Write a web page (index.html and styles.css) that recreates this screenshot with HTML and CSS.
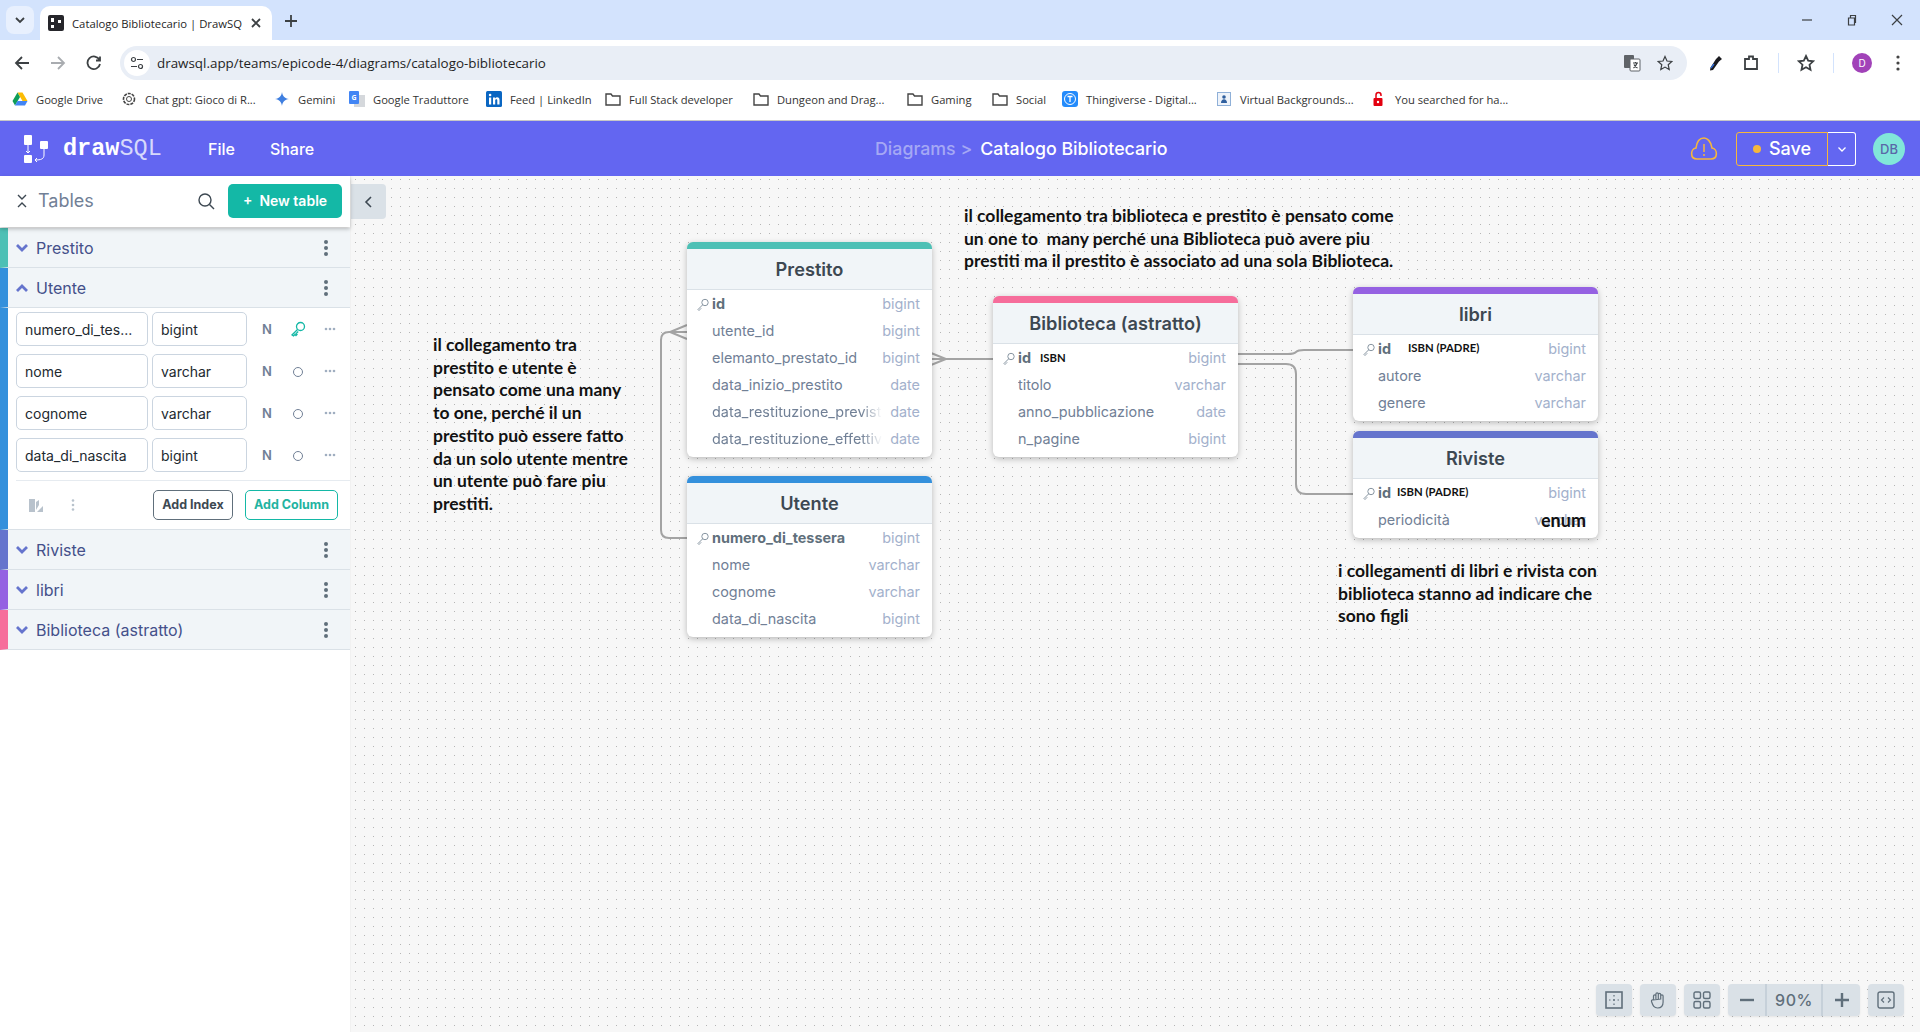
FILE: index.html
```html
<!DOCTYPE html>
<html>
<head>
    <title>Catalogo Bibliotecario | DrawSQL</title>
    <link rel="stylesheet" href="styles.css">
</head>
<body>
    <div class="tabstrip">
        <div class="tab-search">
            <svg width="12" height="12" viewBox="0 0 12 12"><path d="M2 4l4 4 4-4" class="ic-dark"/></svg>
        </div>
        <div class="tab">
            <svg class="favicon" width="16" height="16" viewBox="0 0 16 16"><rect width="16" height="16" rx="2" fill="#26262b"/><rect x="3" y="3" width="3" height="4" fill="#fff"/><rect x="3" y="10" width="3" height="3" fill="#fff"/><rect x="10" y="5" width="3" height="3" fill="#fff"/></svg>
            <span class="tab-title">Catalogo Bibliotecario | DrawSQ</span>
            <svg width="12" height="12" viewBox="0 0 12 12"><path d="M2 2l8 8M10 2l-8 8" class="ic-dark"/></svg>
        </div>
        <svg class="new-tab" width="14" height="14" viewBox="0 0 14 14"><path d="M7 1v12M1 7h12" class="ic-dark"/></svg>
        <div class="window-btns">
            <svg width="12" height="12" viewBox="0 0 12 12"><path d="M1 6h10" class="ic-thin"/></svg>
            <svg width="12" height="12" viewBox="0 0 12 12"><path d="M2.500 4h6v7h-6zM4.500 4V1.500h5v7h-1" class="ic-thin"/></svg>
            <svg width="12" height="12" viewBox="0 0 12 12"><path d="M1 1l10 10M11 1L1 11" class="ic-thin"/></svg>
        </div>
    </div>

    <div class="toolbar">
        <div class="nav-btns">
            <svg width="16" height="16" viewBox="0 0 16 16"><path d="M15 8H2M8 2L2 8l6 6" class="ic-dark"/></svg>
            <svg width="16" height="16" viewBox="0 0 16 16"><path d="M1 8h13M8 2l6 6-6 6" class="ic-faded"/></svg>
            <svg width="16" height="16" viewBox="0 0 16 16"><path d="M13.500 5A6.300 6.300 0 1 0 14 9M14 1.500V5.500h-4" class="ic-dark"/></svg>
        </div>
        <div class="omnibox">
            <span class="site-info">
                <svg width="14" height="14" viewBox="0 0 14 14"><circle cx="3.500" cy="3.500" r="2" class="ic-thin"/><path d="M7 3.500h6M1 10.500h6" class="ic-thin"/><circle cx="10.500" cy="10.500" r="2" class="ic-thin"/></svg>
            </span>
            <span class="url">drawsql.app/teams/epicode-4/diagrams/catalogo-bibliotecario</span>
            <svg class="omni-translate" width="18" height="18" viewBox="0 0 18 18"><rect x="1" y="1" width="10" height="13" rx="1" fill="#5f6368"/><rect x="7" y="5" width="10" height="12" rx="1" fill="#fff" stroke="#5f6368"/><path d="M10 9h5M12.500 8v1M14 9c-1 3-2 4-3.500 5M11 10.500c1 2 2 3 3.500 3.500" class="ic-thin"/></svg>
            <svg width="16" height="16" viewBox="0 0 16 16"><path d="M8 1.500l2 4.500 4.800.5-3.600 3.200 1 4.800L8 12.100l-4.200 2.400 1-4.800L1.200 6.500 6 6z" class="ic-thin"/></svg>
        </div>
        <svg width="18" height="18" viewBox="0 0 18 18"><path d="M13 2l3 3-3 2.500-6 8.500-3 .5.500-3L10 5z" fill="#1b1b1f"/><path d="M4.500 13.500l3-4 1 1-3 4z" fill="#2e6bd6"/></svg>
        <svg width="18" height="18" viewBox="0 0 18 18"><path d="M3 5h4V2.500h4V5h4v10H3z" class="ic-dark" stroke-width="1.500"/></svg>
        <span class="tool-sep"></span>
        <svg width="18" height="18" viewBox="0 0 18 18"><path d="M9 2l2.200 4.700 5 .6-3.700 3.400 1 5L9 13.200l-4.500 2.500 1-5L1.800 7.300l5-.6z" class="ic-dark" stroke-width="1.500"/></svg>
        <span class="tool-sep"></span>
        <span class="profile">D</span>
        <svg class="chrome-menu" width="6" height="18" viewBox="0 0 6 18"><circle cx="3" cy="3" r="1.600" fill="#444"/><circle cx="3" cy="9" r="1.600" fill="#444"/><circle cx="3" cy="15" r="1.600" fill="#444"/></svg>
    </div>

    <div class="bookmarks">
        <div class="bm">
            <svg width="16" height="16" viewBox="0 0 16 16"><path d="M5.500 1.500h5L15.500 10h-5z" fill="#fbbc04"/><path d="M5.500 1.500L.5 10 3 14.500 8 6z" fill="#0f9d58"/><path d="M3 14.500h10l2.500-4.500h-10z" fill="#4285f4"/></svg>
            <span>Google Drive</span>
        </div>
        <div class="bm">
            <svg width="16" height="16" viewBox="0 0 16 16"><circle cx="8" cy="8" r="5.500" fill="none" stroke="#444" stroke-width="1.600" stroke-dasharray="3 1"/><circle cx="8" cy="8" r="2.500" fill="none" stroke="#444"/></svg>
            <span>Chat gpt: Gioco di R...</span>
        </div>
        <div class="bm">
            <svg width="16" height="16" viewBox="0 0 16 16"><path d="M8 1c.6 4 2.500 6.200 7 7-4.500.8-6.400 3-7 7-.6-4-2.500-6.200-7-7 4.500-.8 6.400-3 7-7z" fill="#3f7fe0"/></svg>
            <span>Gemini</span>
        </div>
        <div class="bm">
            <svg width="16" height="16" viewBox="0 0 16 16"><rect x="5" y="4" width="11" height="12" fill="#d5d8dc"/><rect width="10" height="13" rx="1" fill="#4285f4"/><text x="2.500" y="9" class="bm-letter">G</text></svg>
            <span>Google Traduttore</span>
        </div>
        <div class="bm">
            <svg width="16" height="16" viewBox="0 0 16 16"><rect width="16" height="16" rx="1.500" fill="#0a66c2"/><rect x="3" y="6.500" width="2.200" height="7" fill="#fff"/><circle cx="4.100" cy="4" r="1.300" fill="#fff"/><path d="M7 6.500h2v1c.5-.8 1.300-1.200 2.200-1.200 1.600 0 2.300 1 2.300 2.800v4.400h-2.200V9.600c0-.9-.3-1.400-1-1.400-.8 0-1.100.6-1.100 1.400v3.900H7z" fill="#fff"/></svg>
            <span>Feed | LinkedIn</span>
        </div>
        <div class="bm">
            <svg width="16" height="16" viewBox="0 0 16 16"><path class="folder" d="M1 3h5l1.500 2H15v9H1z"/></svg>
            <span>Full Stack developer</span>
        </div>
        <div class="bm">
            <svg width="16" height="16" viewBox="0 0 16 16"><path class="folder" d="M1 3h5l1.500 2H15v9H1z"/></svg>
            <span>Dungeon and Drag...</span>
        </div>
        <div class="bm">
            <svg width="16" height="16" viewBox="0 0 16 16"><path class="folder" d="M1 3h5l1.500 2H15v9H1z"/></svg>
            <span>Gaming</span>
        </div>
        <div class="bm">
            <svg width="16" height="16" viewBox="0 0 16 16"><path class="folder" d="M1 3h5l1.500 2H15v9H1z"/></svg>
            <span>Social</span>
        </div>
        <div class="bm">
            <svg width="16" height="16" viewBox="0 0 16 16"><rect width="16" height="16" rx="3" fill="#248bfb"/><circle cx="8" cy="8" r="5.500" fill="none" stroke="#fff"/><path d="M5.500 5.500h5M8 5.500v5.500" stroke="#fff" stroke-width="1.300"/></svg>
            <span>Thingiverse - Digital...</span>
        </div>
        <div class="bm">
            <svg width="16" height="16" viewBox="0 0 16 16"><rect x="1.500" y="1.500" width="13" height="13" fill="#eef3fa" stroke="#8fb0d8"/><circle cx="8" cy="6" r="1.800" fill="#2f5f9e"/><path d="M5 12c0-5 6-5 6 0z" fill="#2f5f9e"/></svg>
            <span>Virtual Backgrounds...</span>
        </div>
        <div class="bm">
            <svg width="16" height="16" viewBox="0 0 16 16"><rect x="2.500" y="7" width="9" height="8" rx="1" fill="#e3000f"/><path d="M5 7V4a2.500 2.500 0 0 1 5 0v1" fill="none" stroke="#e3000f" stroke-width="1.500"/><circle cx="7" cy="11" r="1.200" fill="#fff"/></svg>
            <span>You searched for ha...</span>
        </div>
    </div>

    <div class="app">
        <header class="app-header">
            <div class="logo">
                <svg width="28" height="30" viewBox="0 0 28 30"><rect x="2" y="1" width="8" height="10" rx="1" fill="#fff"/><rect x="2" y="21" width="8" height="8" rx="1" fill="#fff"/><rect x="18" y="7" width="8" height="8" rx="1" fill="#fff"/><path d="M6 11v8M4 17l2 2 2-2M22 15v6c0 4-3 5-9 5M15 24l-2 2 2 2" fill="none" stroke="#fff" stroke-width="1"/></svg>
                <span class="logo-text"><b>draw</b><span>SQL</span></span>
            </div>
            <nav class="menu">
                <span>File</span>
                <span>Share</span>
            </nav>
            <div class="crumbs">
                <span class="crumb-muted">Diagrams &gt;</span>
                <span class="crumb-name">Catalogo Bibliotecario</span>
            </div>
            <div class="header-right">
                <svg width="28" height="26" viewBox="0 0 28 26"><path d="M7 23c-7 0-7-10-1-11C7 4 11 2 14 2s7 3 8 10c6 1 6 11-1 11z" fill="none" stroke="#f6b73c" stroke-width="1.600"/><path d="M14 8v8M14 18v2" stroke="#f6b73c" stroke-width="1.500"/></svg>
                <div class="save-group">
                    <button class="save-btn"><i class="save-dot"></i>Save</button>
                    <button class="save-more">
                        <svg width="10" height="10" viewBox="0 0 10 10"><path d="M1.500 3.500L5 7l3.500-3.500" fill="none" stroke="#fff" stroke-width="1.300"/></svg>
                    </button>
                </div>
                <span class="avatar">DB</span>
            </div>
        </header>

        <div class="workspace">
            <aside class="sidebar">
                <div class="side-head">
                    <svg width="14" height="16" viewBox="0 0 14 16"><path d="M3 2l4 4 4-4M3 14l4-4 4 4" fill="none" stroke="#3d4852" stroke-width="1.400"/></svg>
                    <span class="side-title">Tables</span>
                    <svg class="side-search" width="18" height="18" viewBox="0 0 18 18"><circle cx="8" cy="8" r="6" fill="none" stroke="#3d4852" stroke-width="1.400"/><path d="M12.500 12.500L17 17" stroke="#3d4852" stroke-width="1.400"/></svg>
                    <button class="new-table">+&nbsp; New table</button>
                </div>

                <div class="side-row c-prestito">
                    <svg class="chev" width="14" height="10" viewBox="0 0 14 10"><path d="M2 2l5 5 5-5"/></svg>
                    <span class="side-name">Prestito</span>
                    <svg class="kebab" width="4" height="16" viewBox="0 0 4 16"><circle cx="2" cy="2" r="2"/><circle cx="2" cy="8" r="2"/><circle cx="2" cy="14" r="2"/></svg>
                </div>

                <div class="side-row c-utente">
                    <svg class="chev" width="14" height="10" viewBox="0 0 14 10"><path d="M2 8l5-5 5 5"/></svg>
                    <span class="side-name">Utente</span>
                    <svg class="kebab" width="4" height="16" viewBox="0 0 4 16"><circle cx="2" cy="2" r="2"/><circle cx="2" cy="8" r="2"/><circle cx="2" cy="14" r="2"/></svg>
                </div>

                <div class="side-body c-utente">
                    <div class="col-row">
                        <span class="col-input col-name">numero_di_tes...</span>
                        <span class="col-input col-type">bigint</span>
                        <span class="col-n">N</span>
                        <svg class="col-flag" width="16" height="16" viewBox="0 0 16 16"><circle cx="10.500" cy="5.500" r="4" fill="none" stroke="#14b8a6" stroke-width="1.300"/><path d="M7.500 8.500L2 14l1.500 1 1.500-1.500 1 1 1-1-.8-1 2-2" fill="none" stroke="#14b8a6" stroke-width="1.300"/></svg>
                        <svg class="col-more" width="12" height="4" viewBox="0 0 12 4"><circle cx="2" cy="2" r="1.300"/><circle cx="6" cy="2" r="1.300"/><circle cx="10" cy="2" r="1.300"/></svg>
                    </div>
                    <div class="col-row">
                        <span class="col-input col-name">nome</span>
                        <span class="col-input col-type">varchar</span>
                        <span class="col-n">N</span>
                        <svg class="col-flag" width="16" height="16" viewBox="0 0 16 16"><circle cx="8" cy="9" r="4.500" fill="none" stroke="#718096" stroke-width="1"/></svg>
                        <svg class="col-more" width="12" height="4" viewBox="0 0 12 4"><circle cx="2" cy="2" r="1.300"/><circle cx="6" cy="2" r="1.300"/><circle cx="10" cy="2" r="1.300"/></svg>
                    </div>
                    <div class="col-row">
                        <span class="col-input col-name">cognome</span>
                        <span class="col-input col-type">varchar</span>
                        <span class="col-n">N</span>
                        <svg class="col-flag" width="16" height="16" viewBox="0 0 16 16"><circle cx="8" cy="9" r="4.500" fill="none" stroke="#718096" stroke-width="1"/></svg>
                        <svg class="col-more" width="12" height="4" viewBox="0 0 12 4"><circle cx="2" cy="2" r="1.300"/><circle cx="6" cy="2" r="1.300"/><circle cx="10" cy="2" r="1.300"/></svg>
                    </div>
                    <div class="col-row">
                        <span class="col-input col-name">data_di_nascita</span>
                        <span class="col-input col-type">bigint</span>
                        <span class="col-n">N</span>
                        <svg class="col-flag" width="16" height="16" viewBox="0 0 16 16"><circle cx="8" cy="9" r="4.500" fill="none" stroke="#718096" stroke-width="1"/></svg>
                        <svg class="col-more" width="12" height="4" viewBox="0 0 12 4"><circle cx="2" cy="2" r="1.300"/><circle cx="6" cy="2" r="1.300"/><circle cx="10" cy="2" r="1.300"/></svg>
                    </div>
                    <div class="side-actions">
                        <svg width="16" height="14" viewBox="0 0 16 14"><path d="M1 1h6v13H1zM8 4l3-2v5l-3 5zM9 14l6-6v6z" fill="#b8c2cc"/></svg>
                        <svg class="more-v" width="4" height="12" viewBox="0 0 4 12"><circle cx="2" cy="1.500" r="1.300"/><circle cx="2" cy="6" r="1.300"/><circle cx="2" cy="10.500" r="1.300"/></svg>
                        <button class="btn-index">Add Index</button>
                        <button class="btn-column">Add Column</button>
                    </div>
                </div>

                <div class="side-row c-riviste">
                    <svg class="chev" width="14" height="10" viewBox="0 0 14 10"><path d="M2 2l5 5 5-5"/></svg>
                    <span class="side-name">Riviste</span>
                    <svg class="kebab" width="4" height="16" viewBox="0 0 4 16"><circle cx="2" cy="2" r="2"/><circle cx="2" cy="8" r="2"/><circle cx="2" cy="14" r="2"/></svg>
                </div>
                <div class="side-row c-libri">
                    <svg class="chev" width="14" height="10" viewBox="0 0 14 10"><path d="M2 2l5 5 5-5"/></svg>
                    <span class="side-name">libri</span>
                    <svg class="kebab" width="4" height="16" viewBox="0 0 4 16"><circle cx="2" cy="2" r="2"/><circle cx="2" cy="8" r="2"/><circle cx="2" cy="14" r="2"/></svg>
                </div>
                <div class="side-row c-biblioteca">
                    <svg class="chev" width="14" height="10" viewBox="0 0 14 10"><path d="M2 2l5 5 5-5"/></svg>
                    <span class="side-name">Biblioteca (astratto)</span>
                    <svg class="kebab" width="4" height="16" viewBox="0 0 4 16"><circle cx="2" cy="2" r="2"/><circle cx="2" cy="8" r="2"/><circle cx="2" cy="14" r="2"/></svg>
                </div>
            </aside>

            <main class="canvas">
                <button class="collapse">
                    <svg width="10" height="14" viewBox="0 0 10 14"><path d="M8 2L3 7l5 5" fill="none" stroke="#3d4852" stroke-width="1.600"/></svg>
                </button>

                <!-- linee tra le tabelle, coordinate relative al canvas -->
                <svg class="links" width="1569" height="856" viewBox="351 176 1569 856">
                    <path d="M687 538H669Q661 538 661 530V340Q661 332 669 332H687M687 325L670 332L687 339"/>
                    <path d="M993 359H931M931 353L946 359L931 365"/>
                    <path d="M1237 354H1288Q1294 354 1296 352Q1298 350 1304 350H1353"/>
                    <path d="M1237 364H1286Q1296 364 1296 374V484Q1296 494 1306 494H1353"/>
                </svg>

                <p class="note note-left">il collegamento tra<br>prestito e utente è<br>pensato come una many<br>to one, perché il un<br>prestito può essere fatto<br>da un solo utente mentre<br>un utente può fare piu<br>prestiti.</p>
                <p class="note note-top">il collegamento tra biblioteca e prestito è pensato come<br>un one to&nbsp; many perché una Biblioteca può avere piu<br>prestiti ma il prestito è associato ad una sola Biblioteca.</p>
                <p class="note note-right">i collegamenti di libri e rivista con<br>biblioteca stanno ad indicare che<br>sono figli</p>

                <section class="tbl t-prestito">
                    <h2 class="tbl-head">Prestito</h2>
                    <div class="tbl-row pk"><svg class="key" width="12" height="13" viewBox="0 0 12 13"><circle cx="8" cy="4.500" r="3.200"/><path d="M5.700 6.800L1 11.500l1 1 1.200-1.200M3.200 11.300l1-1"/></svg><span class="c-n">id</span><span class="c-t">bigint</span></div>
                    <div class="tbl-row"><span class="c-n">utente_id</span><span class="c-t">bigint</span></div>
                    <div class="tbl-row"><span class="c-n">elemanto_prestato_id</span><span class="c-t">bigint</span></div>
                    <div class="tbl-row"><span class="c-n">data_inizio_prestito</span><span class="c-t">date</span></div>
                    <div class="tbl-row"><span class="c-n fade">data_restituzione_prevista</span><span class="c-t">date</span></div>
                    <div class="tbl-row"><span class="c-n fade">data_restituzione_effettiva</span><span class="c-t">date</span></div>
                </section>

                <section class="tbl t-utente">
                    <h2 class="tbl-head">Utente</h2>
                    <div class="tbl-row pk"><svg class="key" width="12" height="13" viewBox="0 0 12 13"><circle cx="8" cy="4.500" r="3.200"/><path d="M5.700 6.800L1 11.500l1 1 1.200-1.200M3.200 11.300l1-1"/></svg><span class="c-n">numero_di_tessera</span><span class="c-t">bigint</span></div>
                    <div class="tbl-row"><span class="c-n">nome</span><span class="c-t">varchar</span></div>
                    <div class="tbl-row"><span class="c-n">cognome</span><span class="c-t">varchar</span></div>
                    <div class="tbl-row"><span class="c-n">data_di_nascita</span><span class="c-t">bigint</span></div>
                </section>

                <section class="tbl t-biblioteca">
                    <h2 class="tbl-head">Biblioteca (astratto)</h2>
                    <div class="tbl-row pk"><svg class="key" width="12" height="13" viewBox="0 0 12 13"><circle cx="8" cy="4.500" r="3.200"/><path d="M5.700 6.800L1 11.500l1 1 1.200-1.200M3.200 11.300l1-1"/></svg><span class="c-n">id</span><span class="tag tag-isbn">ISBN</span><span class="c-t">bigint</span></div>
                    <div class="tbl-row"><span class="c-n">titolo</span><span class="c-t">varchar</span></div>
                    <div class="tbl-row"><span class="c-n">anno_pubblicazione</span><span class="c-t">date</span></div>
                    <div class="tbl-row"><span class="c-n">n_pagine</span><span class="c-t">bigint</span></div>
                </section>

                <section class="tbl t-libri">
                    <h2 class="tbl-head">libri</h2>
                    <div class="tbl-row pk"><svg class="key" width="12" height="13" viewBox="0 0 12 13"><circle cx="8" cy="4.500" r="3.200"/><path d="M5.700 6.800L1 11.500l1 1 1.200-1.200M3.200 11.300l1-1"/></svg><span class="c-n">id</span><span class="tag tag-libri">ISBN (PADRE)</span><span class="c-t">bigint</span></div>
                    <div class="tbl-row"><span class="c-n">autore</span><span class="c-t">varchar</span></div>
                    <div class="tbl-row"><span class="c-n">genere</span><span class="c-t">varchar</span></div>
                </section>

                <section class="tbl t-riviste">
                    <h2 class="tbl-head">Riviste</h2>
                    <div class="tbl-row pk"><svg class="key" width="12" height="13" viewBox="0 0 12 13"><circle cx="8" cy="4.500" r="3.200"/><path d="M5.700 6.800L1 11.500l1 1 1.200-1.200M3.200 11.300l1-1"/></svg><span class="c-n">id</span><span class="tag tag-riviste">ISBN (PADRE)</span><span class="c-t">bigint</span></div>
                    <div class="tbl-row"><span class="c-n">periodicità</span><span class="c-t">varchar</span><span class="enum">enum</span></div>
                </section>

                <div class="controls">
                    <button class="ctl">
                        <svg width="18" height="18" viewBox="0 0 18 18"><rect x="1" y="1" width="16" height="16" fill="none" stroke="#606f7b" stroke-width="1.600"/><path d="M9 4v1.500M9 8v2M9 12.500V14M4 9h1.500M8 9h2M12.500 9H14" stroke="#606f7b" stroke-width="1.200"/></svg>
                    </button>
                    <button class="ctl">
                        <svg width="16" height="18" viewBox="0 0 16 18"><path d="M3.500 9V5a1.200 1.200 0 0 1 2.400 0V8M5.900 8V3a1.200 1.200 0 0 1 2.400 0V8M8.300 8V3.500a1.200 1.200 0 0 1 2.400 0V8M10.700 8V5a1.200 1.200 0 0 1 2.400 0V11c0 3.500-2 6-5.500 6S3 15 1.500 10.500C1.200 9 2.500 8.500 3.500 9z" fill="none" stroke="#606f7b" stroke-width="1.200"/></svg>
                    </button>
                    <button class="ctl">
                        <svg width="18" height="18" viewBox="0 0 18 18" fill="none" stroke="#606f7b" stroke-width="1.400"><rect x="1" y="1" width="6.500" height="6.500" rx="1.500"/><rect x="10.500" y="1" width="6.500" height="6.500" rx="1.500"/><rect x="1" y="10.500" width="6.500" height="6.500" rx="1.500"/><rect x="10.500" y="10.500" width="6.500" height="6.500" rx="1.500"/></svg>
                    </button>
                    <div class="zoom-group">
                        <button class="zoom-btn"><svg width="14" height="14" viewBox="0 0 14 14"><path d="M0 7h14" stroke="#606f7b" stroke-width="2.400"/></svg></button>
                        <span class="zoom-val">90%</span>
                        <button class="zoom-btn"><svg width="14" height="14" viewBox="0 0 14 14"><path d="M0 7h14M7 0v14" stroke="#606f7b" stroke-width="2.400"/></svg></button>
                    </div>
                    <button class="ctl">
                        <svg width="18" height="18" viewBox="0 0 18 18" fill="none" stroke="#606f7b"><rect x="1" y="1" width="16" height="16" rx="2" stroke-width="1.400"/><path d="M7 6.500L4.500 9 7 11.500M11 6.500L13.500 9 11 11.500" stroke-width="1.200"/></svg>
                    </button>
                </div>
            </main>
        </div>
    </div>
</body>
</html>
```

FILE: styles.css
```css
* {
    box-sizing: border-box;
}

html, body {
    height: 100%;
}

body {
    margin: 0;
    font-family: Inter, "Liberation Sans", sans-serif;
    background-color: #fff;
    overflow: hidden;
    display: flex;
    flex-direction: column;
}

button {
    font-family: inherit;
    cursor: pointer;
}

svg {
    flex: none;
    display: block;
}

.ic-dark {
    fill: none;
    stroke: #3c4043;
    stroke-width: 1.800;
}

.ic-thin {
    fill: none;
    stroke: #3c4043;
    stroke-width: 1.200;
}

.ic-faded {
    fill: none;
    stroke: #a9acb0;
    stroke-width: 1.800;
}

/* barra del browser */
.tabstrip {
    height: 40px;
    flex: none;
    background-color: #d3e3fd;
    display: flex;
    align-items: flex-end;
    padding-left: 6px;
}

.tab-search {
    width: 28px;
    height: 28px;
    margin: 0 6px 6px 0;
    border-radius: 8px;
    background-color: #e8f0fe;
    display: flex;
    align-items: center;
    justify-content: center;
}

.tab {
    width: 232px;
    height: 34px;
    background-color: #fff;
    border-radius: 10px 10px 0 0;
    display: flex;
    align-items: center;
    padding: 0 10px 0 8px;
    font-family: "Open Sans", sans-serif;
    font-size: 11.300px;
    color: #1f1f1f;
}

.tab-title {
    flex: 1;
    margin-left: 8px;
    white-space: nowrap;
}

.new-tab {
    margin: 0 0 12px 12px;
}

.window-btns {
    margin-left: auto;
    display: flex;
    gap: 33px;
    padding-right: 17px;
    margin-bottom: 14px;
}

.toolbar {
    height: 44px;
    flex: none;
    background-color: #fff;
    display: flex;
    align-items: center;
    padding: 2px 19px 0 14px;
    gap: 18px;
}

.nav-btns {
    display: flex;
    gap: 20px;
}

.omnibox {
    flex: 1;
    height: 34px;
    margin-right: 1px;
    border-radius: 17px;
    background-color: #e9eef6;
    display: flex;
    align-items: center;
    gap: 16px;
    padding: 0 14px 0 4px;
}

.site-info {
    width: 26px;
    height: 26px;
    margin-right: -9px;
    border-radius: 50%;
    background-color: #fff;
    display: flex;
    align-items: center;
    justify-content: center;
}

.url {
    flex: 1;
    font-family: "Open Sans", sans-serif;
    font-size: 13.400px;
    color: #1f1f1f;
}

.tool-sep {
    width: 1px;
    height: 20px;
    background-color: #d3e3fd;
}

.profile {
    width: 20px;
    height: 20px;
    border-radius: 50%;
    background-color: #a142b8;
    color: #fff;
    font-size: 10px;
    display: flex;
    align-items: center;
    justify-content: center;
}

.chrome-menu {
    margin-left: 5px;
}

.bookmarks {
    height: 37px;
    flex: none;
    display: grid;
    grid-template-columns: 109px 153px 75px 137px 119px 148px 154px 85px 70px 154px 155px 1fr;
    align-items: center;
    padding: 0 0 6px 12px;
    border-bottom: 1px solid #c7c7c7;
    font-family: "Open Sans", sans-serif;
    font-size: 11.200px;
    color: #333;
}

.bm {
    display: flex;
    align-items: center;
    gap: 8px;
    white-space: nowrap;
}

.bm-letter {
    font-size: 7px;
    font-weight: 700;
    fill: #fff;
}

.folder {
    fill: none;
    stroke: #444;
    stroke-width: 1.400;
}

/* drawsql */
.app {
    flex: 1;
    min-height: 0;
    display: flex;
    flex-direction: column;
}

.app-header {
    height: 55px;
    flex: none;
    background-color: #6366f1;
    color: #fff;
    display: flex;
    align-items: center;
    position: relative;
    padding: 0 15px 0 22px;
}

.logo {
    display: flex;
    align-items: center;
    gap: 13px;
    width: 186px;
}

.logo-text {
    font-family: "Liberation Mono", monospace;
    font-size: 23.500px;
    line-height: 1;
}

.logo-text span {
    color: #d7d9fb;
}

.menu {
    display: flex;
    gap: 35px;
    font-size: 16px;
    font-weight: 500;
}

.crumbs {
    position: absolute;
    left: 875px;
    display: flex;
    gap: 8px;
    font-size: 17.800px;
    font-weight: 500;
}

.crumb-muted {
    color: #a5a8f5;
}

.header-right {
    margin-left: auto;
    display: flex;
    align-items: center;
}

.save-group {
    display: flex;
    margin: 0 17px 0 18px;
}

.save-btn {
    width: 92px;
    height: 34px;
    background: none;
    border: 1px solid #f6b73c;
    border-radius: 3px 0 0 3px;
    color: #fff;
    font-size: 18px;
    font-weight: 500;
    display: flex;
    align-items: center;
    justify-content: center;
    gap: 8px;
}

.save-dot {
    width: 8px;
    height: 8px;
    border-radius: 50%;
    background-color: #f6b73c;
}

.save-more {
    width: 28px;
    height: 34px;
    background: none;
    border: 1px solid #fff;
    border-left: 0;
    border-radius: 0 3px 3px 0;
    display: flex;
    align-items: center;
    justify-content: center;
    padding: 0;
}

.avatar {
    width: 32px;
    height: 32px;
    border-radius: 50%;
    background-color: #81e6d9;
    color: #5a67a8;
    font-size: 13px;
    font-weight: 500;
    display: flex;
    align-items: center;
    justify-content: center;
}

.workspace {
    flex: 1;
    min-height: 0;
    display: flex;
}

/* colonna tabelle */
.sidebar {
    width: 351px;
    flex: none;
    background-color: #fff;
    border-right: 1px solid #f1f1f1;
    position: relative;
    z-index: 2;
}

.side-head {
    height: 51px;
    margin-bottom: 1px;
    display: flex;
    align-items: center;
    padding: 0 8px 2px 15px;
    background-color: #fff;
    box-shadow: 0 2px 4px rgba(0, 0, 0, 0.25);
    position: relative;
}

.side-title {
    flex: 1;
    margin-left: 9px;
    font-size: 18px;
    color: #718096;
}

.side-search {
    margin-right: 13px;
}

.new-table {
    width: 114px;
    height: 34px;
    background-color: #14b8a6;
    border: none;
    border-radius: 5px;
    color: #fff;
    font-size: 14px;
    font-weight: 600;
    padding: 0;
}

.side-row {
    height: 40px;
    display: flex;
    align-items: center;
    padding: 0 22px 0 8px;
    background-color: #f1f5f8;
    border-bottom: 1px solid #dae1e7;
    border-left: 8px solid;
}

.c-prestito { border-left-color: #4dc0b5; }
.c-utente { border-left-color: #3490dc; }
.c-riviste { border-left-color: #6574cd; }
.c-libri { border-left-color: #9561e2; }
.c-biblioteca { border-left-color: #f66d9b; }

.chev {
    fill: none;
    stroke: #6574cd;
    stroke-width: 2.800;
    margin-left: -1px;
}

.side-name {
    flex: 1;
    margin-left: 7px;
    font-size: 16px;
    color: #44508a;
}

.kebab {
    fill: #606f7b;
}

.side-body {
    border-left: 8px solid #3490dc;
    padding: 4px 4px 0 8px;
    height: 222px;
    border-bottom: 1px solid #dae1e7;
}

.col-row {
    display: flex;
    align-items: center;
    height: 34px;
    margin-bottom: 8px;
}

.col-input {
    height: 34px;
    display: flex;
    align-items: center;
    background-color: #fff;
    border: 1px solid #cbd5e0;
    border-radius: 5px;
    padding-left: 8px;
    font-size: 14px;
    color: #22292f;
    white-space: nowrap;
}

.col-name {
    width: 132px;
}

.col-type {
    width: 95px;
    margin-left: 4px;
}

.col-n {
    width: 40px;
    text-align: center;
    font-size: 13px;
    font-weight: 600;
    color: #718096;
}

.col-flag {
    margin-left: 3px;
}

.col-more {
    margin-left: 18px;
    fill: #a0aec0;
}

.side-actions {
    display: flex;
    align-items: center;
    height: 48px;
    margin-right: -4px;
    padding-left: 12px;
    border-top: 1px solid #e6ebf0;
}

.more-v {
    margin-left: 27px;
    fill: #b8c2cc;
}

.btn-index, .btn-column {
    height: 30px;
    background-color: #fff;
    border-radius: 5px;
    font-size: 12.500px;
    font-weight: 700;
    padding: 0;
}

.btn-index {
    width: 80px;
    margin-left: 78px;
    border: 1px solid #606f7b;
    color: #3d4852;
}

.btn-column {
    width: 93px;
    margin-left: 12px;
    border: 1px solid #14b8a6;
    color: #22b3a1;
}

/* area del diagramma */
.canvas {
    flex: 1;
    position: relative;
    background-color: #f7f7f7;
    background-image: radial-gradient(circle, #b5b5b5 0.8px, transparent 1px);
    background-size: 9px 9px;
    background-position: 0 -1px;
}

.collapse {
    position: absolute;
    left: 0;
    top: 8px;
    width: 35px;
    height: 35px;
    background-color: #dae1e7;
    border: none;
    border-radius: 0 4px 4px 0;
    display: flex;
    align-items: center;
    justify-content: center;
    padding: 0 2px 0 0;
}

.links {
    position: absolute;
    left: 0;
    top: 0;
}

.links path {
    fill: none;
    stroke: #a3a3a3;
    stroke-width: 2;
}

.note {
    position: absolute;
    margin: 0;
    font-family: Lato, "Open Sans", sans-serif;
    font-weight: 700;
    font-size: 17.500px;
    line-height: 22.700px;
    color: #111;
    white-space: nowrap;
}

.note-left { left: 82px; top: 158px; }
.note-top { left: 613px; top: 29px; }
.note-right { left: 987px; top: 384px; }

.tbl {
    position: absolute;
    width: 245px;
    padding-bottom: 5px;
    background-color: #fff;
    border-top: 7px solid;
    border-radius: 6px;
    box-shadow: 0 2px 6px rgba(0, 0, 0, 0.25);
}

.t-prestito { left: 336px; top: 66px; border-top-color: #4dc0b5; }
.t-utente { left: 336px; top: 300px; border-top-color: #3490dc; }
.t-biblioteca { left: 642px; top: 120px; border-top-color: #f66d9b; }
.t-libri { left: 1002px; top: 111px; border-top-color: #9561e2; }
.t-riviste { left: 1002px; top: 255px; border-top-color: #6574cd; }

.tbl-head {
    height: 41px;
    margin: 0;
    display: flex;
    align-items: center;
    justify-content: center;
    background-color: #f1f5f8;
    border-bottom: 1px solid #dae1e7;
    font-size: 18.200px;
    font-weight: 600;
    color: #3d4852;
}

.tbl-row {
    height: 27px;
    position: relative;
    display: flex;
    align-items: center;
    padding: 0 12px 0 25px;
    font-size: 14.400px;
    color: #718096;
}

.c-n {
    white-space: nowrap;
    overflow: hidden;
}

.fade {
    width: 170px;
    -webkit-mask-image: linear-gradient(to right, #000 88%, transparent);
    mask-image: linear-gradient(to right, #000 88%, transparent);
}

.c-t {
    margin-left: auto;
    color: #a3b1cc;
}

.pk .c-n {
    font-weight: 700;
    color: #606f7b;
}

.key {
    position: absolute;
    left: 10px;
    top: 8px;
    fill: none;
    stroke: #8795a1;
    stroke-width: 1;
}

.tag {
    font-family: Lato, "Open Sans", sans-serif;
    font-size: 11.300px;
    font-weight: 700;
    color: #111;
}

.tag-isbn { margin-left: 9px; }
.tag-libri { margin-left: 17px; margin-top: -3px; }
.tag-riviste { margin-left: 6px; margin-top: -3px; }

.enum {
    position: absolute;
    right: 12px;
    top: 3px;
    font-family: Lato, "Open Sans", sans-serif;
    font-size: 18px;
    font-weight: 700;
    color: #111;
}

.controls {
    position: absolute;
    right: 16px;
    bottom: 16px;
    display: flex;
    gap: 8px;
}

.ctl {
    width: 36px;
    height: 32px;
    background-color: #dae1e7;
    border: none;
    border-radius: 4px;
    display: flex;
    align-items: center;
    justify-content: center;
    padding: 0;
    box-shadow: 0 1px 2px rgba(0, 0, 0, 0.08);
}

.zoom-group {
    width: 132px;
    height: 32px;
    background-color: #dae1e7;
    border-radius: 4px;
    display: flex;
    align-items: center;
    box-shadow: 0 1px 2px rgba(0, 0, 0, 0.08);
}

.zoom-btn {
    width: 37px;
    height: 32px;
    background: none;
    border: none;
    display: flex;
    align-items: center;
    justify-content: center;
    padding: 0;
}

.zoom-val {
    flex: 1;
    height: 32px;
    display: flex;
    align-items: center;
    justify-content: center;
    border-left: 2px solid #c6d0d9;
    border-right: 2px solid #c6d0d9;
    font-size: 16px;
    font-weight: 500;
    letter-spacing: 0.500px;
    color: #606f7b;
}
```
